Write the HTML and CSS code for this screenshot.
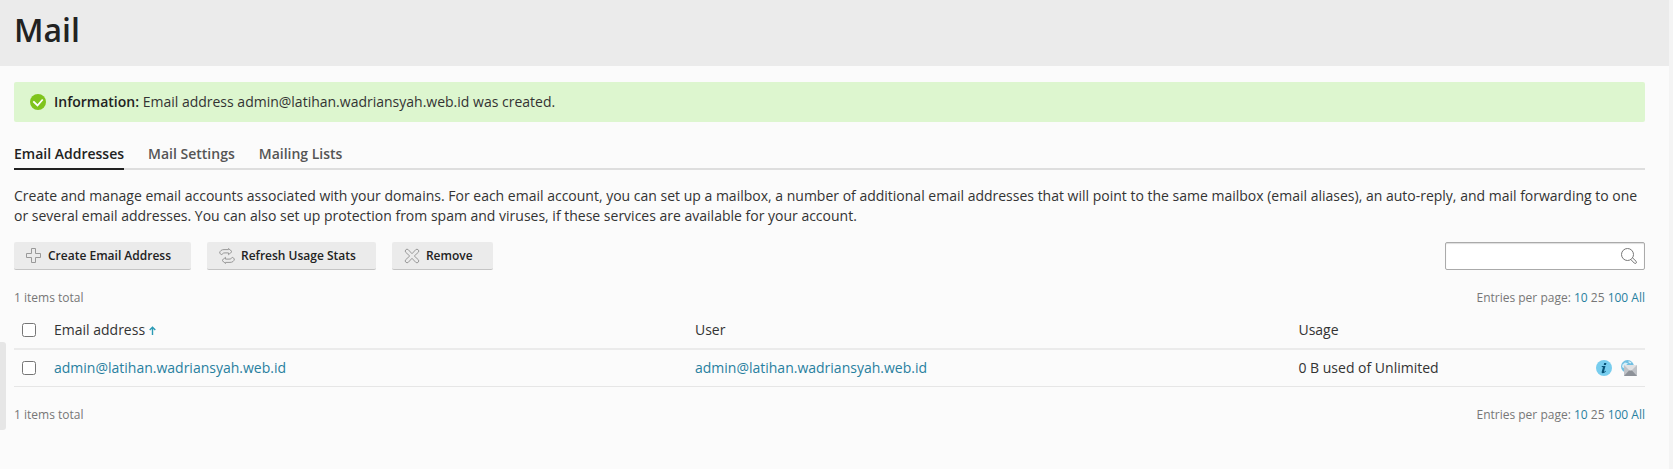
FILE: index.html
```html
<!DOCTYPE html>
<html lang="en">
<head>
<meta charset="utf-8">
<title>Mail</title>
<link rel="stylesheet" href="styles.css">
</head>
<body>
<div class="page">
  <header class="page-header"><h1>Mail</h1></header>
  <button class="side-handle" type="button" aria-label="Toggle sidebar"></button>
  <main class="content">
    <div class="alert" role="status">
      <svg class="icon" viewBox="0 0 16 16" aria-hidden="true"><circle cx="8" cy="8" r="8" fill="#7fc41c"/><path d="M3.300 7.300l4.200 4.200L12.700 5.500" fill="none" stroke="#fff" stroke-width="1.800"/></svg>
      <p><strong>Information:</strong> Email address admin@latihan.wadriansyah.web.id was created.</p>
    </div>
    <nav class="tabs">
      <a class="tab tab-active" href="#addresses" aria-current="page">Email Addresses</a>
      <a class="tab" href="#settings">Mail Settings</a>
      <a class="tab" href="#lists">Mailing Lists</a>
    </nav>
    <p class="description">Create and manage email accounts associated with your domains. For each email account, you can set up a mailbox, a number of additional email addresses that will point to the same mailbox (email aliases), an auto-reply, and mail forwarding to one or several email addresses. You can also set up protection from spam and viruses, if these services are available for your account.</p>
    <div class="toolbar">
      <button class="btn" type="button">
        <svg class="icon line-icon" viewBox="0 0 16 16" aria-hidden="true"><path d="M5.500.5h4v5h5v4h-5v5h-4v-5h-5v-4h5z"/></svg>
        Create Email Address
      </button>
      <button class="btn" type="button">
        <svg class="icon line-icon" viewBox="0 0 16 16" aria-hidden="true"><path d="M2.800 6.800L.6 5.200C.8 2.800 2.600 1.600 5 1.600h4.500V.5L13 3.600 9.500 6.700V4.900H6C4 4.900 3.400 5.500 2.800 6.800z"/><path d="M13.200 9.200l2.200 1.600c-.2 2.400-2 3.600-4.400 3.600H6.500v1.100L3 12.400l3.500-3.100v1.800H10c2 0 2.600-.6 3.200-1.900z"/></svg>
        Refresh Usage Stats
      </button>
      <button class="btn" type="button">
        <svg class="icon line-icon" viewBox="0 0 16 16" aria-hidden="true"><path d="M8 5.700L11.800 1.600Q13 .7 14.200 1.800T14.400 4.200L10.300 8l4.100 3.800q.9 1.200-.2 2.400t-2.400.2L8 10.300l-3.800 4.100q-1.200.9-2.400-.2t-.2-2.400L5.700 8 1.600 4.200Q.7 3 1.800 1.800T4.200 1.600z"/></svg>
        Remove
      </button>
      <form class="search" role="search">
        <input class="search-input" type="text" aria-label="Search">
        <button class="search-btn" type="button" aria-label="Search"><svg class="icon line-icon search-icon" viewBox="0 0 16 16" aria-hidden="true"><circle cx="6.500" cy="6.500" r="6"/><path d="M11.600 9.900l3.500 3.400a1.200 1.200 0 0 1-1.800 1.800l-3.400-3.500"/></svg></button>
      </form>
    </div>
    <div class="pager">
      <span>1 items total</span>
      <span>Entries per page: <a href="#10">10</a> 25 <a href="#100">100</a> <a href="#all">All</a></span>
    </div>
    <table class="list">
      <colgroup><col class="col-check"><col class="col-email"><col class="col-user"><col><col class="col-actions"></colgroup>
      <thead>
        <tr>
          <th><input class="check" type="checkbox" aria-label="Select all"></th>
          <th>Email address <svg class="sort" viewBox="0 0 7 9" aria-hidden="true"><path d="M3.500 9V1.500M.7 4l2.800-2.800L6.300 4"/></svg></th>
          <th>User</th>
          <th>Usage</th>
          <th></th>
        </tr>
      </thead>
      <tbody>
        <tr>
          <td><input class="check" type="checkbox" aria-label="Select admin@latihan.wadriansyah.web.id"></td>
          <td><a href="#email">admin@latihan.wadriansyah.web.id</a></td>
          <td><a href="#user">admin@latihan.wadriansyah.web.id</a></td>
          <td>0 B used of Unlimited</td>
          <td>
            <div class="actions">
              <a href="#info" aria-label="Information"><svg class="icon" viewBox="0 0 16 16" aria-hidden="true"><circle cx="8" cy="8" r="8" fill="#77cdee"/><path d="M8.200 2.900h2.200l-.5 2H7.700zM5.800 6.100h3.700L8 11.500q-.1.500.3.300l1.300-1 .4.500Q8.500 13.200 6.800 13.200q-1.500 0-1.100-1.500L7 7.200l-1.300-.3z" fill="#075378"/></svg></a>
              <a href="#webmail" aria-label="Webmail"><svg class="icon" viewBox="0 0 16 16" aria-hidden="true"><circle cx="6.500" cy="6.500" r="6.500" fill="#70bfe2"/><path d="M1.500 4.500l2.500-2 3 .8-2 2-1.500.5-.5 2.500L1 7zM7.500 1l3 1.300-.8 1.200-2-.7z" fill="#d5eef8"/><path d="M3 5h13v11H3z" fill="#bfc2c7"/><path d="M3 5l6.500 6.500L16 5z" fill="#e1e2e4"/><path d="M3 16l5-5.500h3l5 5.500z" fill="#8d9198"/></svg></a>
            </div>
          </td>
        </tr>
      </tbody>
    </table>
    <div class="pager">
      <span>1 items total</span>
      <span>Entries per page: <a href="#10">10</a> 25 <a href="#100">100</a> <a href="#all">All</a></span>
    </div>
  </main>
</div>
</body>
</html>
```
FILE: styles.css
```css
* { box-sizing: border-box; }
body {
  margin: 0;
  background: #fbfbfb;
  color: #333;
  font: 14px/20px "Open Sans", sans-serif;
}
h1, p { margin: 0; }
a { color: #28809f; text-decoration: none; }
.page {
  position: relative;
  min-height: 100vh;
  border-right: 4px solid #f4f4f4;
}
.page-header {
  padding: 10px 14px 16px;
  background: #ebebeb;
}
h1 {
  color: #222;
  font-size: 32px;
  font-weight: 600;
  line-height: 40px;
}
.side-handle {
  position: absolute;
  top: 342px;
  left: 0;
  width: 6px;
  height: 88px;
  padding: 0;
  border: 0;
  border-radius: 0 3px 3px 0;
  background: #e6e6e6;
}
.content { padding: 16px 24px 16px 14px; }
.icon { display: block; flex: none; width: 16px; height: 16px; }
.line-icon { fill: none; stroke: #999; stroke-width: 1; }
.alert {
  display: flex;
  align-items: center;
  gap: 8px;
  padding: 10px 16px;
  border-radius: 2px;
  background: #ddf6cf;
}
.alert strong { font-weight: 600; color: #222; }
.tabs {
  display: flex;
  gap: 24px;
  margin-top: 20px;
  border-bottom: 2px solid #dedede;
}
.tab {
  margin-bottom: -2px;
  padding: 2px 0 4px;
  border-bottom: 2px solid transparent;
  color: #555;
  font-weight: 600;
}
.tab-active { border-color: #222; color: #222; }
.description { margin-top: 16px; }
.toolbar { display: flex; gap: 16px; margin-top: 16px; }
.btn {
  display: flex;
  align-items: center;
  gap: 6px;
  height: 28px;
  padding: 0 20px 0 12px;
  border: 0;
  border-bottom: 1px solid #c4c4c4;
  border-radius: 2px;
  background: #ebebeb;
  color: #222;
  font: 600 12px/18px "Open Sans", sans-serif;
}
.search {
  display: flex;
  align-items: center;
  width: 200px;
  height: 28px;
  margin-left: auto;
  padding-right: 7px;
  border: 1px solid #aaa;
  border-radius: 2px;
  background: #fff;
  box-shadow: inset 0 1px 1px #ddd;
}
.search-input {
  flex: 1;
  min-width: 0;
  padding: 0 8px;
  border: 0;
  outline: 0;
  background: transparent;
  font: inherit;
}
.search-btn { padding: 0; border: 0; background: transparent; }
.search-icon { stroke: #777; }
.pager {
  display: flex;
  justify-content: space-between;
  margin-top: 18px;
  color: #777;
  font-size: 12px;
}
.list {
  width: 100%;
  margin-top: 4px;
  border-collapse: separate;
  border-spacing: 0;
  table-layout: fixed;
}
.list th, .list td {
  padding: 0 8px;
  text-align: left;
  font-weight: 400;
}
.list th { height: 38px; border-bottom: 2px solid #ebebeb; }
.list td { height: 37px; border-bottom: 1px solid #e6e6e6; }
.col-check { width: 32px; }
.col-email { width: 39.3%; }
.col-user { width: 37%; }
.col-actions { width: 64px; }
.check { display: block; width: 14px; height: 14px; margin: 0; }
.sort {
  width: 7px;
  height: 9px;
  fill: none;
  stroke: #2b9ab5;
  stroke-width: 1.4;
}
.actions { display: flex; justify-content: flex-end; gap: 9px; }
```
